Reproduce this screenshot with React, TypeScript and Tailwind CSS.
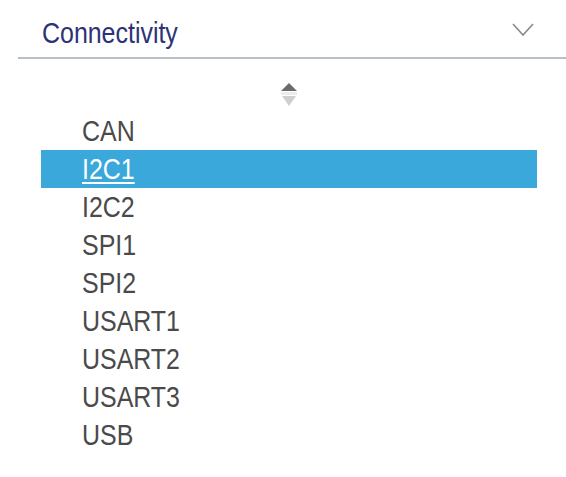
import React from "react";

const items = ["CAN", "I2C1", "I2C2", "SPI1", "SPI2", "USART1", "USART2", "USART3", "USB"];

export default function App() {
  return (
    <div className="w-[566px] h-[477px] bg-white font-['Liberation_Sans',Arial,sans-serif] overflow-hidden">
      <div className="flex items-start ml-[18px] h-[59px] border-b-2 border-[#b6c0c6] pl-[24px] pr-[32px]">
        <span className="mt-[19px] inline-block origin-left scale-x-[0.86] text-[29px] leading-[29px] text-[#2d3276] whitespace-nowrap">
          Connectivity
        </span>
        <svg className="ml-auto mt-[23px]" width="22" height="14" viewBox="0 0 22 14" fill="none">
          <polyline points="1,1 11,12 21,1" stroke="#8a8a8a" strokeWidth="1.6" />
        </svg>
      </div>
      <div className="h-[53px] pl-[281px] pt-[24px]">
        <svg width="16" height="24" viewBox="0 0 16 24">
          <polygon points="0,8 8,0 16,8" fill="#6b6b6b" />
          <rect x="0" y="9" width="16" height="3" fill="#ececec" />
          <polygon points="1,13 15,13 8,23" fill="#cfcfcf" />
        </svg>
      </div>
      <div className="ml-[41px] w-[496px] flex flex-col">
        {items.map((it) => {
          const sel = it === "I2C1";
          return (
            <div
              key={it}
              className={
                sel
                  ? "h-[38px] pl-[41px] bg-[#3aa8da] text-white"
                  : "h-[38px] pl-[41px] text-[#4a4a4a]"
              }
            >
              <span
                className={
                  sel
                    ? "inline-block origin-left scale-x-[0.86] text-[29px] leading-[38px] underline decoration-2 underline-offset-[3px] whitespace-nowrap"
                    : "inline-block origin-left scale-x-[0.86] text-[29px] leading-[38px] whitespace-nowrap"
                }
              >
                {it}
              </span>
            </div>
          );
        })}
      </div>
    </div>
  );
}
